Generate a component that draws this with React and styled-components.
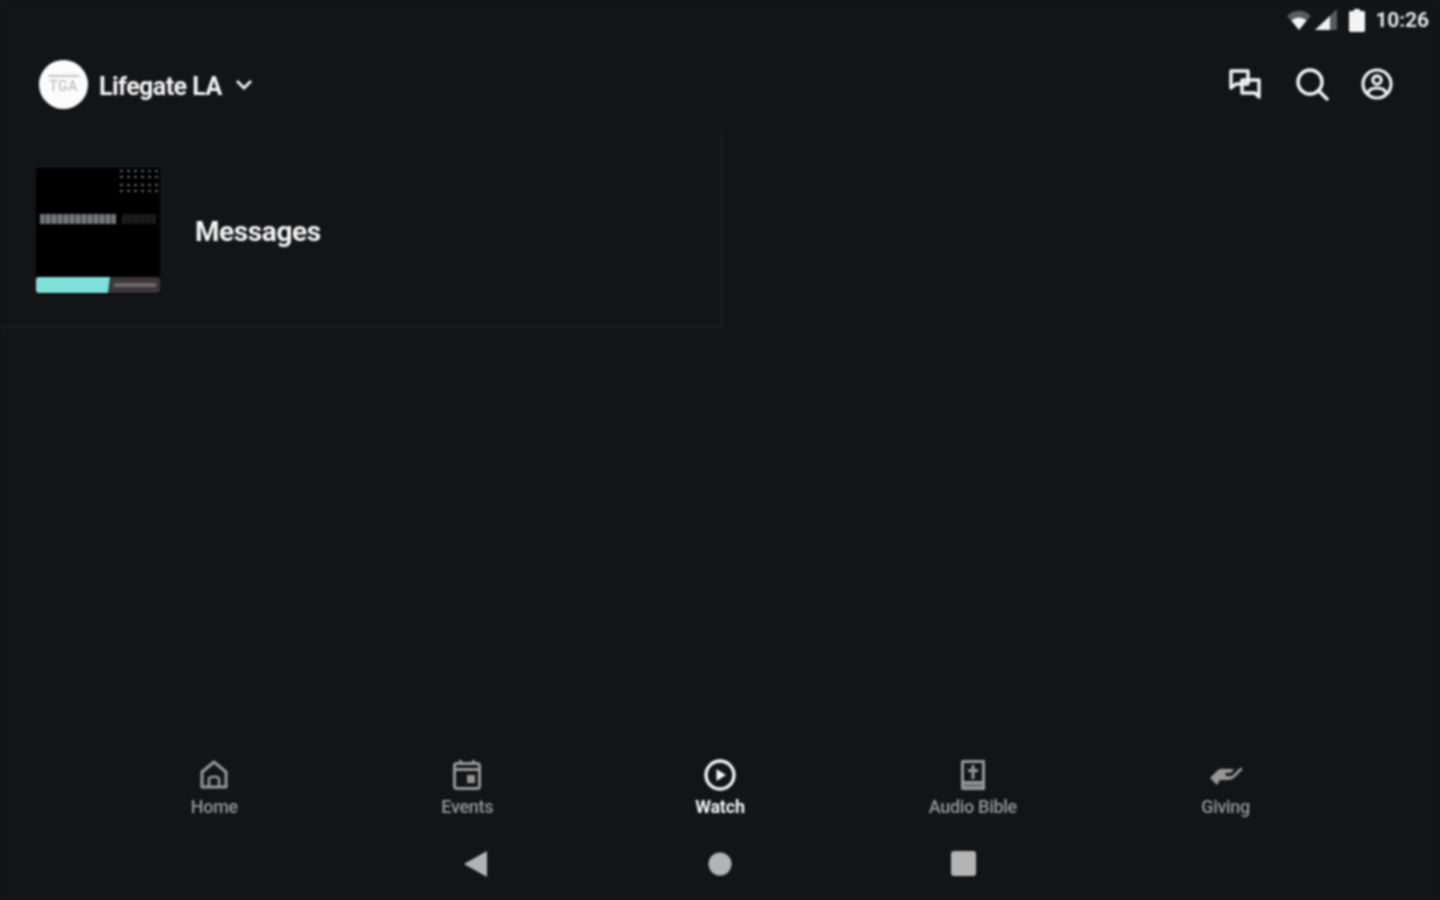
import React from 'react';
import styled, { createGlobalStyle } from 'styled-components';

const GlobalStyle = createGlobalStyle`
    html, body {
        margin: 0;
        padding: 0;
        background: #131416;
    }
    * {
        box-sizing: border-box;
    }
`;

const Screen = styled.div`
    width: 1440px;
    height: 900px;
    overflow: hidden;
    display: flex;
    flex-direction: column;
    background: #131416;
    color: #fff;
    font-family: Roboto, "Liberation Sans", sans-serif;
    filter: blur(0.8px);
`;

const StatusBar = styled.div`
    height: 38px;
    flex: none;
    display: flex;
    align-items: center;
    justify-content: flex-end;
    padding: 1px 11px 0 0;
`;

const StatusIcon = styled.svg`
    display: block;
    flex: none;
    margin-right: ${props => props.$gap}px;
`;

const Clock = styled.span`
    font-size: 21px;
    font-weight: 700;
    letter-spacing: -0.1px;
    color: #e6e6e6;
`;

const Header = styled.div`
    height: 96px;
    flex: none;
    display: flex;
    align-items: center;
    justify-content: space-between;
    padding: 0 47px 4px 39px;
`;

const Brand = styled.div`
    display: flex;
    align-items: center;
`;

const Logo = styled.div`
    width: 49px;
    height: 49px;
    border-radius: 50%;
    background: #fbfbfb;
    display: flex;
    align-items: center;
    justify-content: center;
    margin-right: 11px;
`;

const LogoText = styled.span`
    border-top: 2px solid #c4c4c4;
    padding: 2px 1px 0;
    font-size: 14px;
    line-height: 14px;
    color: #b4b4b4;
    letter-spacing: 0.5px;
`;

const BrandName = styled.span`
    position: relative;
    top: 2px;
    font-size: 25px;
    font-weight: 700;
    letter-spacing: -0.55px;
    margin-right: 13px;
    color: #f5f5f5;
`;

const Chevron = styled.svg`
    position: relative;
    top: 1px;
    display: block;
`;

const HeaderActions = styled.div`
    display: flex;
    align-items: center;
    gap: 32.5px;
`;

const Content = styled.div`
    flex: 1;
`;

const MessagesCard = styled.div`
    width: 723px;
    height: 194px;
    display: flex;
    align-items: center;
    padding: 2px 0 0 36px;
    border-right: 2px solid #1b1c1e;
    border-bottom: 2px solid #1b1c1e;
`;

const Thumb = styled.div`
    position: relative;
    width: 124px;
    height: 126px;
    background: #000;
    margin-right: 36px;
    overflow: hidden;
    flex: none;
`;

const DotGrid = styled.div`
    position: absolute;
    top: ${props => props.$top}px;
    right: 0;
    width: 42px;
    height: ${props => props.$height}px;
    background-image: radial-gradient(circle, #77787a 1px, transparent 1.4px);
    background-size: 7px 6px;
`;

const ThumbText = styled.div`
    position: absolute;
    top: 46px;
    left: ${props => props.$left}px;
    width: ${props => props.$width}px;
    height: 10px;
    background: repeating-linear-gradient(90deg, ${props => props.$color} 0 4px, ${props => props.$dim} 4px 6px);
`;

const ThumbBar = styled.div`
    position: absolute;
    left: 0;
    right: 0;
    bottom: 1px;
    height: 16px;
    background: #3d3639;
    border-radius: 3px;
`;

const ThumbFill = styled.div`
    height: 100%;
    width: 74px;
    background: #7fe0da;
    clip-path: polygon(0 0, 100% 0, 97% 100%, 0 100%);
    border-radius: 3px 0 0 3px;
`;

const ThumbBarText = styled.div`
    position: absolute;
    top: 6px;
    left: 78px;
    width: 42px;
    height: 4px;
    background: #6d6568;
`;

const CardTitle = styled.span`
    position: relative;
    left: -1px;
    font-size: 28px;
    font-weight: 700;
    letter-spacing: -0.4px;
    color: #f5f5f5;
`;

const TabBar = styled.div`
    flex: none;
    display: grid;
    grid-template-columns: repeat(5, 1fr);
    width: 1264px;
    margin: 0 auto 23px;
`;

const Tab = styled.div`
    display: flex;
    flex-direction: column;
    align-items: center;
    gap: 5px;
    color: ${props => (props.$active ? '#f4f4f4' : '#979797')};
`;

const TabIcon = styled.svg`
    display: block;
`;

const TabLabel = styled.span`
    font-size: 18px;
    line-height: 21px;
    font-weight: ${props => (props.$active ? 700 : 500)};
    letter-spacing: ${props => (props.$active ? '-0.2px' : '-0.3px')};
`;

const NavBar = styled.div`
    height: 47px;
    flex: none;
    margin-bottom: 13px;
    padding-right: 2px;
    display: flex;
    align-items: center;
    justify-content: center;
    gap: 219px;
`;

const NavIcon = styled.svg`
    display: block;
`;

const WifiIcon = () => (
    <StatusIcon $gap={3} width="26" height="24" viewBox="0 0 26 24">
        <path d="M1 8C8 1 18 1 25 8L13 22Z" fill="#5a5a5a" />
        <path d="M5.500 12.500C10 8.500 16 8.500 20.500 12.500L13 22Z" fill="#f4f4f4" />
    </StatusIcon>
);

const SignalIcon = () => (
    <StatusIcon $gap={11} width="23" height="24" viewBox="0 0 23 24">
        <path d="M0 22L22 1V22Z" fill="#5a5a5a" />
        <path d="M0 22L15 8V22Z" fill="#f0f0f0" />
    </StatusIcon>
);

const BatteryIcon = () => (
    <StatusIcon $gap={10} width="16" height="24" viewBox="0 0 16 24">
        <path d="M5 1H11V3H14.500A1.500 1.500 0 0 1 16 4.500V22.500A1.500 1.500 0 0 1 14.500 24H1.500A1.500 1.500 0 0 1 0 22.500V4.500A1.500 1.500 0 0 1 1.500 3H5Z" fill="#f4f4f4" />
    </StatusIcon>
);

const ChatIcon = () => (
    <svg width="34" height="32" viewBox="0 0 34 32" fill="none" stroke="#f5f5f5" strokeWidth="3.400" strokeLinejoin="round">
        <path d="M3 3H20V16H8L3 20Z" />
        <path d="M14 12H31V29L27 25H14Z" />
    </svg>
);

const SearchIcon = () => (
    <svg width="34" height="34" viewBox="0 0 34 34" fill="none" stroke="#f5f5f5" strokeWidth="3.400" strokeLinecap="round">
        <circle cx="15" cy="15" r="12" />
        <path d="M24 24L32 32" />
    </svg>
);

const AccountIcon = () => (
    <svg width="32" height="32" viewBox="0 0 32 32" fill="none" stroke="#f5f5f5" strokeWidth="3.200">
        <circle cx="16" cy="16" r="14" />
        <circle cx="16" cy="12" r="4.200" />
        <path d="M7 25C8 21 11 20 16 20C21 20 24 21 25 25" />
    </svg>
);

const HomeIcon = () => (
    <TabIcon width="30" height="32" viewBox="0 0 30 32" fill="none" stroke="currentColor" strokeWidth="3" strokeLinejoin="round">
        <path d="M15 3L27 13V28H3V13Z" />
        <path d="M10 27V20C10 17 20 17 20 20V27" strokeWidth="2.600" />
    </TabIcon>
);

const EventsIcon = () => (
    <TabIcon width="30" height="32" viewBox="0 0 30 32" fill="none" stroke="currentColor" strokeWidth="3">
        <rect x="2.500" y="4.500" width="25" height="25" rx="2.500" />
        <path d="M2.500 10.500H27.500M8.500 1V5M21.500 1V5" />
        <rect x="15" y="16" width="8" height="8" fill="currentColor" stroke="none" />
    </TabIcon>
);

const WatchIcon = () => (
    <TabIcon width="32" height="32" viewBox="0 0 32 32" fill="none" stroke="currentColor" strokeWidth="3.400">
        <circle cx="16" cy="16" r="14" />
        <path d="M12.500 10L22 16L12.500 22Z" fill="currentColor" stroke="none" />
    </TabIcon>
);

const BibleIcon = () => (
    <TabIcon width="28" height="32" viewBox="0 0 26 32">
        <path fillRule="evenodd" fill="currentColor" d="M3 1H25V31H3C1.500 31 1 30 1 29V3C1 2 1.500 1 3 1ZM4 4V22H22V4ZM11.500 6H14.500V10H18V13H14.500V20H11.500V13H8V10H11.500ZM4 25V28H22V25Z" />
        <rect x="4" y="25" width="18" height="3" fill="currentColor" opacity="0.7" />
    </TabIcon>
);

const GivingIcon = () => (
    <TabIcon width="34" height="32" viewBox="0 0 34 32">
        <path fill="currentColor" d="M1 19L9 11C12 9 15 10 18 10L25 10L22 14H16L17 17H23L31 9C33 8 34 10 33 11L26 18C24 20 22 21 19 21H11L8 26Z" />
    </TabIcon>
);

const tabs = [
    { label: 'Home', Icon: HomeIcon },
    { label: 'Events', Icon: EventsIcon },
    { label: 'Watch', Icon: WatchIcon, active: true },
    { label: 'Audio Bible', Icon: BibleIcon },
    { label: 'Giving', Icon: GivingIcon },
];

export default function App() {
    return (
        <Screen>
            <GlobalStyle />
            <StatusBar>
                <WifiIcon />
                <SignalIcon />
                <BatteryIcon />
                <Clock>10:26</Clock>
            </StatusBar>

            <Header>
                <Brand>
                    <Logo>
                        <LogoText>TGA</LogoText>
                    </Logo>
                    <BrandName>Lifegate LA</BrandName>
                    <Chevron width="18" height="12" viewBox="0 0 18 12" fill="none" stroke="#f5f5f5" strokeWidth="2.800">
                        <path d="M2 2L9 9L16 2" />
                    </Chevron>
                </Brand>
                <HeaderActions>
                    <ChatIcon />
                    <SearchIcon />
                    <AccountIcon />
                </HeaderActions>
            </Header>

            <Content>
                <MessagesCard>
                    <Thumb>
                        <DotGrid $top={0} $height={12} />
                        <DotGrid $top={14} $height={10} />
                        <ThumbText $left={4} $width={76} $color="#77787a" $dim="#4c4d4f" />
                        <ThumbText $left={86} $width={34} $color="#1c1c1c" $dim="#141414" />
                        <ThumbBar>
                            <ThumbFill />
                            <ThumbBarText />
                        </ThumbBar>
                    </Thumb>
                    <CardTitle>Messages</CardTitle>
                </MessagesCard>
            </Content>

            <TabBar>
                {tabs.map(({ label, Icon, active }) => (
                    <Tab key={label} $active={active}>
                        <Icon />
                        <TabLabel $active={active}>{label}</TabLabel>
                    </Tab>
                ))}
            </TabBar>

            <NavBar>
                <NavIcon width="26" height="28" viewBox="0 0 26 28">
                    <path d="M24 1V27L1 14Z" fill="#b4b4b4" />
                </NavIcon>
                <NavIcon width="24" height="24" viewBox="0 0 24 24">
                    <circle cx="12" cy="12" r="11.500" fill="#b4b4b4" />
                </NavIcon>
                <NavIcon width="25" height="25" viewBox="0 0 25 25">
                    <rect width="25" height="25" rx="3" fill="#b4b4b4" />
                </NavIcon>
            </NavBar>
        </Screen>
    );
}
